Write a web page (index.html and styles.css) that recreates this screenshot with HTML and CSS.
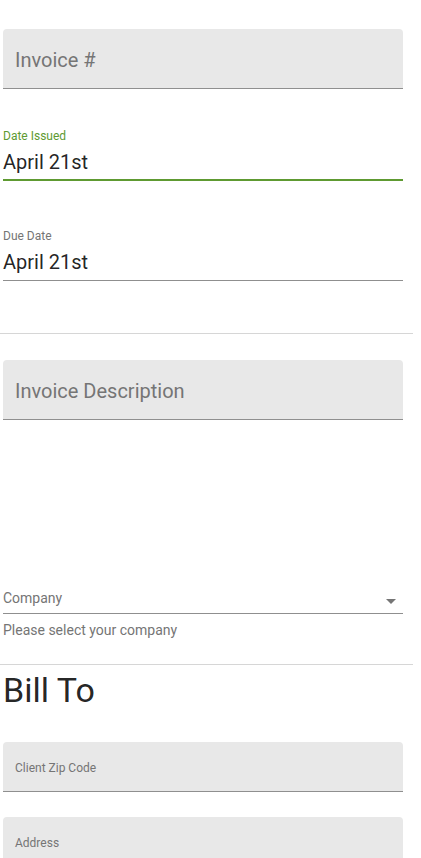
FILE: index.html
```html
<!DOCTYPE html>
<html lang="en">
<head>
<meta charset="utf-8">
<title>Invoice</title>
<link rel="stylesheet" href="styles.css">
</head>
<body>
<div class="page">
  <div class="filled big"><span class="ph">Invoice #</span></div>

  <div class="std focused">
    <div class="lbl">Date Issued</div>
    <div class="val">April 21st</div>
  </div>

  <div class="std due">
    <div class="lbl">Due Date</div>
    <div class="val">April 21st</div>
  </div>

  <hr class="divider first">

  <div class="filled big desc"><span class="ph">Invoice Description</span></div>

  <div class="select">
    <span class="sel-text">Company</span>
    <svg class="arrow" width="24" height="24" viewBox="0 0 24 24" aria-hidden="true"><path d="M7 10l5 5 5-5z"/></svg>
  </div>
  <p class="helper">Please select your company</p>

  <hr class="divider second">

  <h2 class="title">Bill To</h2>

  <div class="filled small zip"><span class="ph">Client Zip Code</span></div>
  <div class="filled small addr"><span class="ph">Address</span></div>
</div>
</body>
</html>
```

FILE: styles.css
```css
html, body {
  margin: 0;
  padding: 0;
  background: #ffffff;
}

body {
  font-family: Roboto, "Noto Sans", Arial, sans-serif;
  color: rgba(0, 0, 0, 0.87);
  overflow: hidden;
}

.page {
  padding-top: 29px;
  display: flex;
  flex-direction: column;
}

.filled {
  margin-left: 3px;
  width: 400px;
  box-sizing: border-box;
  background: #e8e8e8;
  border-radius: 4px 4px 0 0;
  border-bottom: 1px solid #8f8f8f;
  padding: 19px 12px 16px 12px;
  color: #757575;
}

.filled.big {
  font-size: 20px;
  line-height: 24px;
}

.filled.small {
  font-size: 12px;
  line-height: 14px;
}

.filled .ph {
  display: block;
}

.std {
  margin-left: 3px;
  width: 400px;
  display: flex;
  flex-direction: column;
}

.std .lbl {
  font-size: 12px;
  line-height: 14px;
  color: #757575;
  margin-bottom: 7px;
}

.std .val {
  font-size: 20px;
  line-height: 24px;
  color: rgba(0, 0, 0, 0.87);
  padding-bottom: 6px;
  border-bottom: 1px solid #8f8f8f;
}

.std.focused {
  margin-top: 40px;
}

.std.focused .lbl {
  color: #5e9a31;
}

.std.focused .val {
  padding-bottom: 5px;
  border-bottom: 2px solid #5e9a31;
}

.std.due {
  margin-top: 48px;
}

.divider {
  width: 413px;
  height: 1px;
  border: 0;
  margin: 0;
  background: #d6d6d6;
}

.divider.first {
  margin-top: 52px;
}

.desc {
  margin-top: 26px;
}

.select {
  position: relative;
  margin-left: 3px;
  width: 400px;
  margin-top: 168px;
  font-size: 14px;
  line-height: 20px;
  color: #757575;
  padding-bottom: 5px;
  border-bottom: 1px solid #8f8f8f;
}

.sel-text {
  display: block;
}

.arrow {
  position: absolute;
  right: 0;
  top: 1px;
  fill: rgba(0, 0, 0, 0.54);
}

.helper {
  margin: 6px 0 0 3px;
  font-size: 14px;
  line-height: 20px;
  color: #757575;
}

.divider.second {
  margin-top: 24px;
}

.title {
  margin: 5px 0 0 3px;
  font-size: 34px;
  line-height: 40px;
  font-weight: 400;
  color: rgba(0, 0, 0, 0.87);
}

.zip {
  margin-top: 32px;
}

.addr {
  margin-top: 25px;
}
```
